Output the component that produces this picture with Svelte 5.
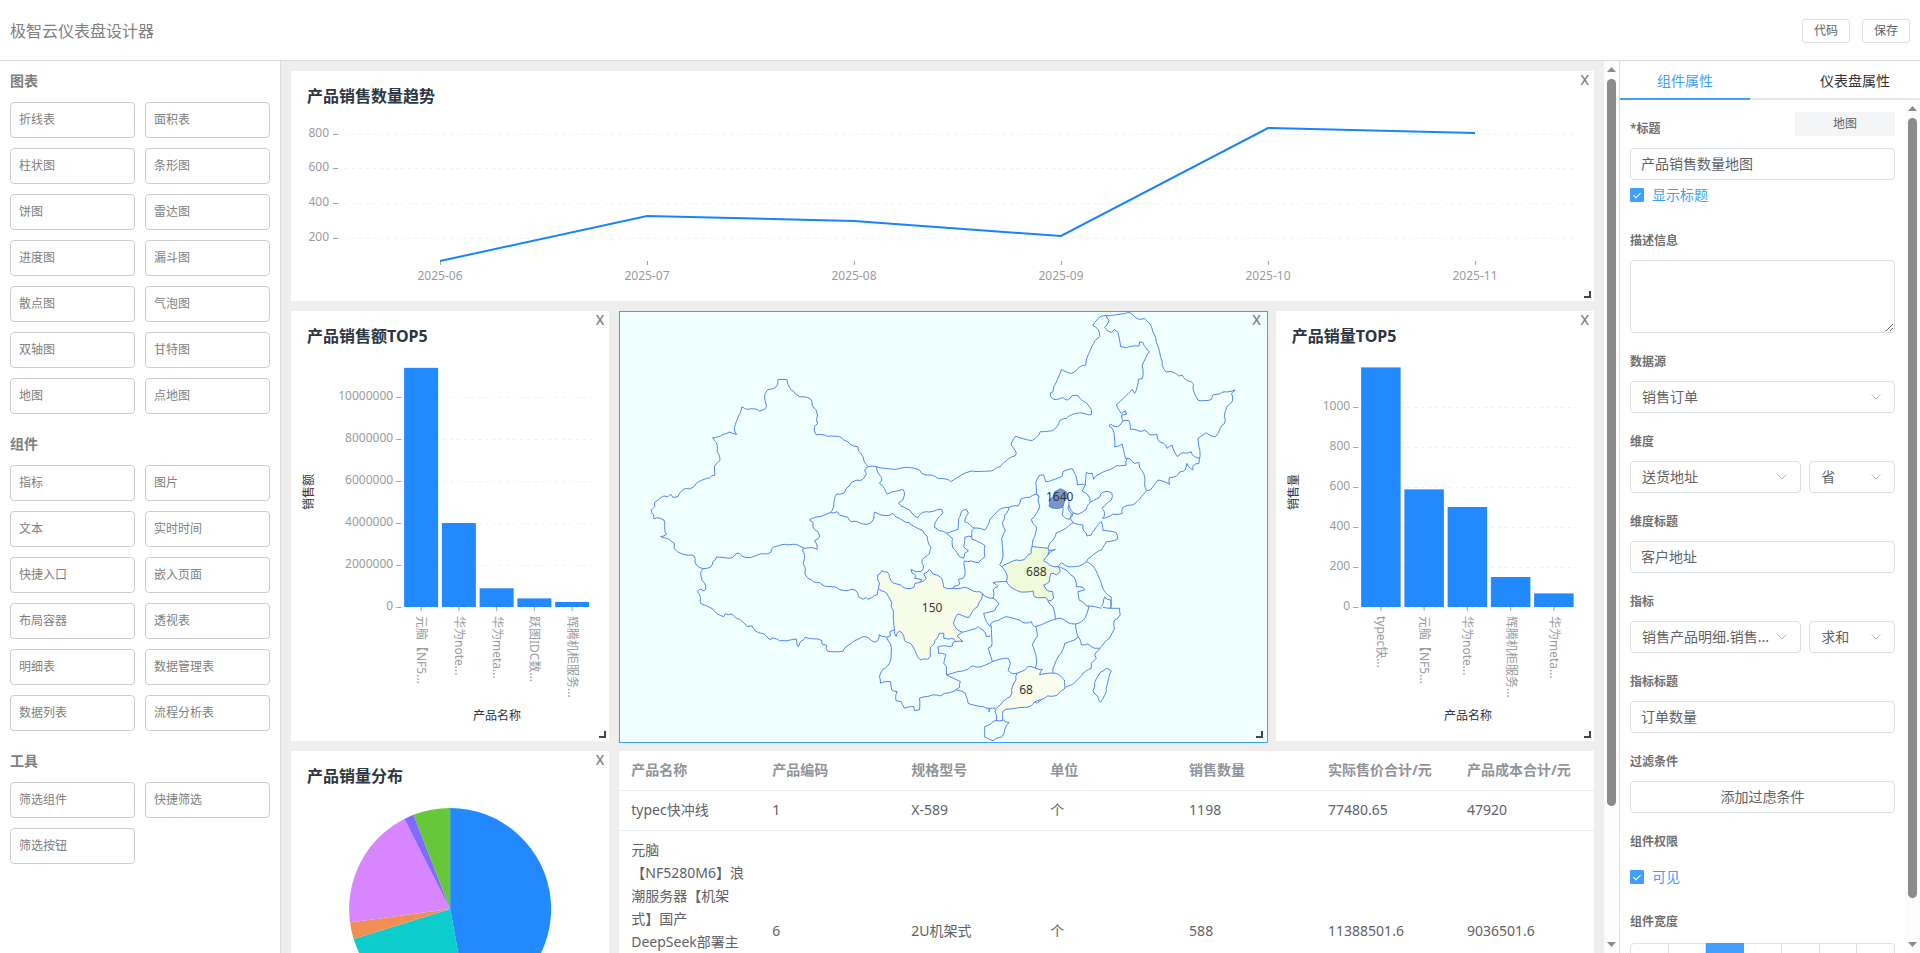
<script lang="ts">
	interface BarChart {
		title: string;
		yTitle: string;
		xTitleAt: number;
		labelRight: number;
		tickLeft: number;
		plotLeft: number;
		barLeft: number;
		barWidth: number;
		step: number;
		scale: number;
		ticks: number[];
		bars: { name: string; value: number }[];
	}

	type Point = [number, number];

	const groups = [
		{
			title: '图表',
			items: ['折线表', '面积表', '柱状图', '条形图', '饼图', '雷达图', '进度图', '漏斗图', '散点图', '气泡图', '双轴图', '甘特图', '地图', '点地图']
		},
		{
			title: '组件',
			items: ['指标', '图片', '文本', '实时时间', '快捷入口', '嵌入页面', '布局容器', '透视表', '明细表', '数据管理表', '数据列表', '流程分析表']
		},
		{ title: '工具', items: ['筛选组件', '快捷筛选', '筛选按钮'] }
	];

	// line chart
	const trendTicks = [
		{ label: 800, y: 63 },
		{ label: 600, y: 97 },
		{ label: 400, y: 132 },
		{ label: 200, y: 167 }
	];
	const trend = [
		{ month: '2025-06', x: 149, y: 190 },
		{ month: '2025-07', x: 356, y: 145 },
		{ month: '2025-08', x: 563, y: 150 },
		{ month: '2025-09', x: 770, y: 165 },
		{ month: '2025-10', x: 977, y: 57 },
		{ month: '2025-11', x: 1184, y: 62 }
	];
	const trendLine = trend.map((p) => `${p.x},${p.y}`).join(' ');

	// bar charts
	const baseline = 296;
	const amount: BarChart = {
		title: '产品销售额TOP5',
		yTitle: '销售额',
		xTitleAt: 206,
		labelRight: 102,
		tickLeft: 105,
		plotLeft: 110,
		barLeft: 113,
		barWidth: 34,
		step: 37.75,
		scale: 0.000021,
		ticks: [0, 2000000, 4000000, 6000000, 8000000, 10000000],
		bars: [
			{ name: '元脑【NF5...', value: 11388501 },
			{ name: '华为note...', value: 4000000 },
			{ name: '华为meta...', value: 890000 },
			{ name: '跃图IDC数...', value: 410000 },
			{ name: '辉腾机柜服务...', value: 240000 }
		]
	};
	const volume: BarChart = {
		title: '产品销量TOP5',
		yTitle: '销售量',
		xTitleAt: 192,
		labelRight: 74,
		tickLeft: 77,
		plotLeft: 82,
		barLeft: 85,
		barWidth: 39.5,
		step: 43.25,
		scale: 0.2,
		ticks: [0, 200, 400, 600, 800, 1000],
		bars: [
			{ name: 'typec快...', value: 1198 },
			{ name: '元脑【NF5...', value: 588 },
			{ name: '华为note...', value: 500 },
			{ name: '辉腾机柜服务...', value: 150 },
			{ name: '华为meta...', value: 68 }
		]
	};

	// pie chart
	const pie = [
		{ value: 1198, color: '#1783ff' },
		{ value: 588, color: '#00c9c9' },
		{ value: 68, color: '#f0884d' },
		{ value: 500, color: '#d580ff' },
		{ value: 40, color: '#7863ff' },
		{ value: 150, color: '#60c42d' }
	];
	const total = pie.reduce((sum, s) => sum + s.value, 0);
	const slices = pie.map((s, i) => {
		const before = pie.slice(0, i).reduce((sum, p) => sum + p.value, 0);
		const a = (before / total) * Math.PI * 2;
		const b = ((before + s.value) / total) * Math.PI * 2;
		const at = (t: number) => `${(159 + 101 * Math.sin(t)).toFixed(2)} ${(158 - 101 * Math.cos(t)).toFixed(2)}`;
		return { color: s.color, d: `M159 158L${at(a)}A101 101 0 0 1 ${at(b)}Z` };
	});

	// table
	const columns = ['产品名称', '产品编码', '规格型号', '单位', '销售数量', '实际售价合计/元', '产品成本合计/元'];
	const rows = [
		['typec快冲线', '1', 'X-589', '个', '1198', '77480.65', '47920'],
		[
			'元脑\n【NF5280M6】浪\n潮服务器【机架\n式】国产\nDeepSeek部署主\n机AI推理\n虚拟化数据库\n服务器',
			'6',
			'2U机架式',
			'个',
			'588',
			'11388501.6',
			'9036501.6'
		]
	];

	// map: province borders as point lists
	const borders = [
		'752,500 738,482 730,462 722,452 720,440 708,438 690,425 670,412 630,409 595,404 589,392 590,380 599,370 596,358 599,345 595,330 583,315 579,298 570,292 556,290 540,286 528,274 515,262 510,252 507,238 495,238 480,238 478,255 472,263 450,268 442,280 443,305 446,320 440,328 425,333 418,328 388,328 372,320 366,340 350,382 350,392 356,403 345,400 334,396 315,403 284,413 290,422 296,428 298,455 306,482 298,488 290,498 291,525 275,534 235,550 228,560 215,567 196,568 180,590 165,592 158,582 150,590 138,588 120,600 110,607 110,620 100,630 107,645 108,657 125,654 138,660 140,680 141,695 146,703 128,710 140,713 153,718 160,724 170,730 168,745 178,755 192,762 210,766 229,768 231,785 235,795 245,803 257,806',
		'257,806 278,802 285,785 296,771 335,775 345,772 355,760 365,760 372,768 400,772 430,761 458,758 463,745 480,738 500,733 525,733 545,738 560,745 575,743 598,748 598,735 590,722 606,708 600,695 585,680 586,668 575,660 606,650 637,638',
		'637,638 648,615 656,582 680,578 685,565 700,548 718,540 725,542 740,532 746,520 740,512 744,505 752,500',
		'257,806 248,820 250,832 260,850 263,868 258,873 246,867 238,875 248,895 250,912 275,922 290,935 318,950 322,942 342,942 350,950 365,958 388,980 403,978 408,988 430,1000 445,1008 458,1020 462,1014 475,1016 485,1023 505,1023 535,1017 537,1035 542,1040 548,1025 562,1012 600,1017 612,1022 612,1032 626,1036 629,1054 675,1054 690,1037 710,1022 733,1011 752,1014 770,1027 780,1022 784,1004 800,1010 806,1012 818,1008 816,995 828,990',
		'560,745 553,750 560,775 556,790 562,803 561,820 570,835 588,846 605,848 630,860 655,862 675,871 700,868 712,870 720,880 722,890 735,898 745,893 750,898 763,893 778,885 782,865',
		'637,638 658,635 665,645 675,648 690,652 700,665 725,668 748,673 760,668 769,655 770,636 790,645 805,647 825,640 845,655 858,663 875,668 890,680 915,692 928,708 930,722 940,742 935,760 920,772 912,788 917,805 910,815 895,815 880,808 882,818 895,828 890,835 912,840 905,848',
		'776,500 785,525 792,540 785,550 800,565 808,582 822,576 838,573 855,568 860,585 855,600 842,609 860,622 875,630 885,642 900,653 910,640 935,636 950,633 972,628 975,638 960,655 952,668 950,682 965,692 986,700',
		'986,700 1021,688 1023,655 1031,635 1046,628 1052,640 1041,665 1064,682 1071,684',
		'986,700 1004,715 1006,745 1021,765 1038,775 1041,760 1052,752 1038,740 1041,712 1062,710 1063,692 1071,684',
		'1062,710 1063,718 1102,737 1102,770 1090,780 1082,788 1060,783 1040,783 1040,800 1042,820 1036,835 1022,838 1026,852 1010,858 1006,865',
		'752,500 776,500 840,507 878,503 905,510 912,520 935,525 960,535 984,537 998,545 1031,525 1066,513 1126,511 1148,500 1166,482 1191,468 1196,460 1180,435 1194,408 1244,421 1256,412 1268,395 1304,392 1318,380 1326,362 1346,355 1376,340 1406,342 1422,343 1421,328 1406,308 1381,287 1364,286 1349,300 1334,292 1308,298 1298,288 1298,278 1306,275 1308,260 1331,208 1361,220 1381,205 1404,195 1406,180 1428,130 1431,122 1446,108 1441,88 1426,76 1436,62 1451,48 1466,46 1531,37',
		'1531,37 1546,45 1566,58 1581,55 1598,72 1606,95 1616,125 1626,155 1634,185 1638,205 1646,216 1671,218 1684,228 1694,225 1711,242 1728,252 1728,272 1741,300 1781,298 1786,285 1806,282 1821,275 1853,269 1842,280 1844,305 1832,315 1821,350 1821,370 1806,390 1794,410 1766,398 1741,415 1744,440 1746,475',
		'1746,475 1744,490 1726,498 1726,510 1708,490 1704,508 1688,515 1676,528 1656,532 1656,553 1621,540 1598,570 1588,572 1571,590 1544,615 1516,622 1514,640 1486,642 1454,655 1461,640 1454,625 1481,600 1483,580 1471,574 1456,576 1446,592 1418,607 1406,628 1381,643 1366,638 1358,655 1366,668',
		'1466,46 1474,60 1461,82 1481,97 1491,88 1501,97 1509,140 1526,143 1564,138 1566,125 1576,127 1596,155 1574,200 1574,235 1562,238 1551,280 1544,268 1496,314 1511,340 1524,332 1526,343 1512,345 1516,362',
		'1516,362 1534,362 1538,388 1564,393 1581,390 1594,403 1618,402 1626,425 1638,430 1648,445 1664,435 1680,470 1696,458 1721,455 1731,470 1746,475',
		'1516,362 1501,380 1478,372 1474,378 1486,390 1491,440 1514,432 1524,475',
		'1524,475 1536,475 1551,490 1564,487 1566,502 1578,520 1581,550 1588,572',
		'1528,475 1526,495 1496,497 1466,512 1446,522 1428,538 1424,520 1406,517 1403,555',
		'1403,555 1379,555 1371,520 1364,506 1336,515 1334,527 1284,545 1278,525 1266,525 1254,548 1256,580 1264,590',
		'1403,555 1394,573 1411,585 1418,607',
		'1264,590 1256,582 1236,592 1209,598 1201,618 1174,622 1146,628 1116,660 1101,690 1071,684',
		'1174,622 1161,645 1154,668 1163,690 1152,715 1156,765 1146,795 1152,800',
		'1264,590 1261,600 1266,620 1256,640 1241,658 1256,680 1246,720 1243,740',
		'1366,668 1351,680 1316,698 1306,720 1291,745',
		'1336,620 1334,645 1344,655 1356,658 1361,640 1351,625 1354,605 1348,590',
		'1366,638 1354,615',
		'1366,668 1396,675 1398,692 1408,708 1421,705 1451,665 1456,692 1496,698 1499,718 1466,725 1451,750 1421,770 1406,785',
		'1406,785 1386,798 1371,800 1351,800 1331,788 1321,800',
		'1291,765 1313,748 1294,752',
		'1406,785 1431,805 1451,850 1458,870 1481,892 1479,925',
		'1321,800 1351,815 1368,830 1376,860 1396,862 1401,870 1381,875 1384,900 1406,918 1416,918 1451,925',
		'1451,920 1458,900 1461,892 1479,900 1479,925 1456,922',
		'1479,925 1506,925 1508,945 1491,960 1491,985 1476,1015 1456,1035 1444,1050',
		'1414,918 1406,945 1391,965 1374,972 1381,1010 1391,1035 1411,1032 1431,1045 1444,1045',
		'1444,1050 1431,1065 1436,1075 1421,1090 1421,1105 1396,1120 1361,1155 1344,1162',
		'1381,1010 1366,1022 1341,1030 1326,1065 1311,1095 1306,1120',
		'1291,903 1306,920 1313,958 1331,955 1351,968 1374,972',
		'1166,845 1126,848 1141,860 1126,870 1126,895',
		'1094,880 1100,888 1126,895 1144,912 1131,932 1098,940 1106,965 1118,980',
		'1118,972 1141,962 1166,950 1196,958 1216,968 1241,965 1251,980 1281,970 1313,958',
		'1034,997 1066,988 1081,980 1096,990 1106,1010 1118,1008',
		'1118,972 1121,1040 1111,1045 1124,1085 1146,1078 1171,1075 1178,1090 1171,1112 1186,1122 1198,1120',
		'1254,980 1259,1010 1244,1035 1256,1075 1252,1105',
		'1134,1225 1116,1225 1114,1236 1114,1225 1096,1220 1051,1210 1041,1178 1014,1170',
		'1124,1085 1091,1100 1066,1098 1051,1108 1021,1115 986,1125 1028,1145 1026,1162 1014,1170',
		'986,1125 986,1100 978,1090 984,1065 962,1060 960,1042 985,1038 1004,1038 1006,1028 1034,1022',
		'1014,1170 981,1180 966,1188 945,1185 930,1190 905,1195 905,1230 890,1232 888,1220 860,1225 850,1205 835,1203 838,1175 822,1170 818,1145 788,1150 785,1130 795,1108 815,1090 820,1060 818,1032 806,1012',
		'1101,1280 1126,1265 1156,1260 1174,1268 1161,1290 1151,1312 1126,1323 1101,1312 1101,1280',
		'1466,1105 1481,1113 1466,1175 1448,1207 1441,1190 1426,1172 1431,1148 1451,1115 1466,1105',
		'1246,1200 1258,1192 1269,1202 1256,1210 1246,1200'
	];

	const regions = [
		{
			value: 1640,
			fill: '#7b96c6',
			x: 1326,
			y: 603,
			points: '1294,600 1306,590 1311,575 1328,566 1348,578 1351,592 1340,605 1336,620 1311,625 1294,618 1294,600'
		},
		{
			value: 688,
			fill: '#eefad8',
			x: 1256,
			y: 828,
			points:
				'1152,800 1196,780 1221,778 1241,760 1243,740 1291,745 1294,752 1291,765 1278,782 1296,795 1321,800 1328,815 1316,825 1300,820 1295,845 1278,855 1285,868 1305,875 1308,895 1292,903 1285,893 1270,893 1250,890 1246,873 1205,875 1180,862 1166,842 1168,825 1152,800'
		},
		{
			value: 150,
			fill: '#f8fdea',
			x: 943,
			y: 935,
			points:
				'782,865 785,850 780,825 792,812 808,816 815,832 828,850 848,855 870,866 888,862 892,850 905,848 912,845 925,835 918,822 935,808 945,822 972,835 978,862 1006,865 1040,862 1060,870 1085,875 1094,880 1086,905 1080,920 1062,938 1055,952 1035,947 1020,942 1012,955 1007,970 1015,985 1034,997 1018,1008 1034,1025 1014,1025 1001,1015 994,1018 978,1015 978,1000 965,1000 958,1015 950,1030 938,1042 938,1070 930,1078 908,1080 895,1060 878,1030 860,1022 858,1008 845,993 835,1010 830,985 827,940 820,920 822,908 812,890 800,875 782,865'
		},
		{
			value: 68,
			fill: '#f9fdeb',
			x: 1225,
			y: 1181,
			points:
				'1198,1120 1221,1110 1231,1100 1254,1105 1274,1108 1266,1125 1306,1120 1325,1125 1340,1140 1342,1165 1328,1175 1320,1185 1290,1188 1268,1200 1250,1207 1230,1222 1200,1224 1165,1228 1155,1235 1155,1262 1136,1262 1132,1235 1148,1215 1178,1190 1182,1168 1195,1140 1198,1120'
		}
	];

	// Splits long edges and nudges the new points so borders look surveyed.
	// An edge gives the same result in either direction, so neighbours line up.
	function roughen(list: string) {
		const pts = list.split(' ').map((p) => p.split(',').map(Number) as Point);
		const out: Point[] = [pts[0]];
		for (let i = 1; i < pts.length; i++) {
			const flip = pts[i - 1][0] > pts[i][0];
			const [a, b] = flip ? [pts[i], pts[i - 1]] : [pts[i - 1], pts[i]];
			const dx = b[0] - a[0];
			const dy = b[1] - a[1];
			const len = Math.hypot(dx, dy) || 1;
			const n = Math.floor(len / 8);
			const mid: Point[] = [];
			for (let k = 1; k < n; k++) {
				const noise = Math.sin(a[0] * 12.9 + a[1] * 78.2 + k * 37.7) * 2.4;
				mid.push([a[0] + (dx * k) / n - (dy / len) * noise, a[1] + (dy * k) / n + (dx / len) * noise]);
			}
			if (flip) mid.reverse();
			out.push(...mid, pts[i]);
		}
		return out.map((p) => `${p[0].toFixed(1)},${p[1].toFixed(1)}`).join(' ');
	}

	let activeTab = $state('组件属性');
	let title = $state('产品销售数量地图');
	let showTitle = $state(true);
	let visible = $state(true);
	let span = $state(3);
</script>

{#snippet tools()}
	<button class="close" aria-label="删除">X</button>
	<span class="resize"></span>
{/snippet}

{#snippet scrollbar(size: number)}
	<div class="scrollbar">
		<svg class="arrow" viewBox="0 0 9 5"><path d="M4.5 0L9 5H0z" /></svg>
		<div class="thumb" style="height: {size}%"></div>
		<svg class="arrow down" viewBox="0 0 9 5"><path d="M0 0h9L4.500 5z" /></svg>
	</div>
{/snippet}

{#snippet barCard(chart: BarChart)}
	<div class="card quarter tall">
		<h3>{chart.title}</h3>
		<svg viewBox="0 40 318 390" class="chart">
			{#each chart.ticks as t (t)}
				{@const y = Math.round(baseline - t * chart.scale)}
				<line class="grid-line" x1={chart.plotLeft} x2="301" y1={y + 0.5} y2={y + 0.5} />
				<line class="tick" x1={chart.tickLeft} x2={chart.tickLeft + 5} y1={y + 0.5} y2={y + 0.5} />
				<text class="axis" x={chart.labelRight} y={y + 3} text-anchor="end">{t}</text>
			{/each}
			{#each chart.bars as bar, i (bar.name)}
				{@const x = chart.barLeft + i * chart.step}
				{@const cx = x + chart.barWidth / 2}
				<rect class="bar" {x} y={baseline - bar.value * chart.scale} width={chart.barWidth} height={bar.value * chart.scale} />
				<line class="tick" x1={cx} x2={cx} y1={baseline} y2={baseline + 4} />
				<text class="axis" transform="translate({cx - 4} 305) rotate(90)">{bar.name}</text>
			{/each}
			<text class="axis-title" x={chart.xTitleAt} y="409" text-anchor="middle">产品名称</text>
			<text class="axis-title" transform="translate(22 181) rotate(-90)" text-anchor="middle">{chart.yTitle}</text>
		</svg>
		{@render tools()}
	</div>
{/snippet}

{#snippet picker(label: string, value: string)}
	<div class="select">
		<select aria-label={label}>
			<option>{value}</option>
		</select>
		<svg viewBox="0 0 10 6"><path d="M0.500 0.500L5 5L9.500 0.500" /></svg>
	</div>
{/snippet}

<div class="designer">
	<header>
		<h1>极智云仪表盘设计器</h1>
		<div class="actions">
			<button>代码</button>
			<button>保存</button>
		</div>
	</header>

	<div class="workspace">
		<aside class="palette">
			{#each groups as group (group.title)}
				<section>
					<h2>{group.title}</h2>
					<div class="palette-grid">
						{#each group.items as item (item)}
							<button>{item}</button>
						{/each}
					</div>
				</section>
			{/each}
		</aside>

		<main>
			<div class="board">
				<div class="card full">
					<h3>产品销售数量趋势</h3>
					<svg viewBox="0 40 1303 190" class="chart">
						{#each trendTicks as t (t.label)}
							<line class="grid-line" x1="47" x2="1287" y1={t.y + 0.5} y2={t.y + 0.5} />
							<line class="tick" x1="42" x2="47" y1={t.y + 0.5} y2={t.y + 0.5} />
							<text class="axis" x="38" y={t.y + 3} text-anchor="end">{t.label}</text>
						{/each}
						{#each trend as p (p.month)}
							<line class="tick" x1={p.x + 0.5} x2={p.x + 0.5} y1="190" y2="194" />
							<text class="axis" x={p.x} y="209" text-anchor="middle">{p.month}</text>
						{/each}
						<polyline class="trend" points={trendLine} />
					</svg>
					{@render tools()}
				</div>

				{@render barCard(amount)}

				<div class="card half tall">
					<div class="selected">
						<svg viewBox="6 36 1941 1290" class="map">
							{#each borders as b (b)}
								<polyline points={roughen(b)} />
							{/each}
							{#each regions as r (r.value)}
								<polygon points={roughen(r.points)} fill={r.fill} />
							{/each}
							{#each regions as r (r.value)}
								<text x={r.x} y={r.y} text-anchor="middle">{r.value}</text>
							{/each}
						</svg>
					</div>
					{@render tools()}
				</div>

				{@render barCard(volume)}

				<div class="card quarter tall">
					<h3>产品销量分布</h3>
					<svg viewBox="0 40 318 390" class="chart">
						{#each slices as s (s.d)}
							<path d={s.d} fill={s.color} fill-opacity="0.95" />
						{/each}
					</svg>
					{@render tools()}
				</div>

				<div class="card wide tall">
					<table>
						<thead>
							<tr>
								{#each columns as c (c)}
									<th>{c}</th>
								{/each}
							</tr>
						</thead>
						<tbody>
							{#each rows as row (row[0])}
								<tr>
									{#each row as cell}
										<td>{cell}</td>
									{/each}
								</tr>
							{/each}
						</tbody>
					</table>
				</div>
			</div>
			{@render scrollbar(82.6)}
		</main>

		<aside class="props">
			<div class="tabs" role="tablist">
				{#each ['组件属性', '仪表盘属性'] as tab (tab)}
					<button role="tab" aria-selected={activeTab === tab} class:active={activeTab === tab} onclick={() => (activeTab = tab)}>{tab}</button>
				{/each}
			</div>
			<div class="props-scroll">
				<form>
					<div class="form-head">
						<label class="caption" for="title">*标题</label>
						<span class="kind">地图</span>
					</div>
					<input id="title" type="text" bind:value={title} />
					<label class="check title-check"><input type="checkbox" bind:checked={showTitle} />显示标题</label>

					<div class="field">
						<label class="caption" for="desc">描述信息</label>
						<textarea id="desc"></textarea>
					</div>
					<div class="field">
						<span class="caption">数据源</span>
						{@render picker('数据源', '销售订单')}
					</div>
					<div class="field">
						<span class="caption">维度</span>
						<div class="pair">
							{@render picker('维度', '送货地址')}
							{@render picker('维度层级', '省')}
						</div>
					</div>
					<div class="field">
						<label class="caption" for="dim-title">维度标题</label>
						<input id="dim-title" type="text" value="客户地址" />
					</div>
					<div class="field">
						<span class="caption">指标</span>
						<div class="pair">
							{@render picker('指标', '销售产品明细.销售...')}
							{@render picker('聚合方式', '求和')}
						</div>
					</div>
					<div class="field">
						<label class="caption" for="metric-title">指标标题</label>
						<input id="metric-title" type="text" value="订单数量" />
					</div>
					<div class="field">
						<span class="caption">过滤条件</span>
						<button type="button" class="add">添加过虑条件</button>
					</div>
					<div class="field">
						<span class="caption">组件权限</span>
						<label class="check"><input type="checkbox" bind:checked={visible} />可见</label>
					</div>
					<div class="field">
						<span class="caption">组件宽度</span>
						<div class="spans">
							{#each [1, 2, 3, 4, 5, 6, 7] as n (n)}
								<input type="radio" name="span" value={n} bind:group={span} aria-label="宽度 {n}" />
							{/each}
						</div>
					</div>
				</form>
				{@render scrollbar(92.7)}
			</div>
		</aside>
	</div>
</div>

<style>
	:global(body) {
		margin: 0;
		background: #fff;
	}

	.designer,
	.designer :is(button, input, select, textarea) {
		font-family: 'Noto Sans', 'Noto Sans CJK SC', sans-serif;
	}

	.designer {
		display: flex;
		flex-direction: column;
		height: 100vh;
		overflow: hidden;
		color: #606266;
		font-size: 14px;
	}

	.designer :is(div, aside, main, header, button, input, select, textarea) {
		box-sizing: border-box;
	}

	h1,
	h2,
	h3 {
		margin: 0;
	}

	button {
		cursor: pointer;
	}

	header {
		display: flex;
		align-items: center;
		justify-content: space-between;
		flex: 0 0 61px;
		padding: 2px 10px 0;
		border-bottom: 1px solid #dcdcdc;
	}

	h1 {
		font-size: 16px;
		font-weight: 400;
		line-height: 24px;
		color: #808080;
	}

	.actions {
		display: flex;
		gap: 12px;
	}

	.actions button {
		width: 48px;
		height: 24px;
		padding: 0;
		border: 1px solid #dcdfe6;
		border-radius: 3px;
		background: #fff;
		color: #606266;
		font-size: 12px;
		line-height: 20px;
	}

	.workspace {
		display: flex;
		flex: 1;
		min-height: 0;
	}

	/* palette */
	.palette {
		flex: 0 0 281px;
		padding: 0 10px;
		border-right: 1px solid #dcdcdc;
		overflow: hidden;
	}

	.palette section {
		padding-bottom: 10px;
	}

	h2 {
		padding-bottom: 2px;
		font-size: 14px;
		line-height: 39px;
		color: #808080;
	}

	.palette-grid {
		display: grid;
		grid-template-columns: 1fr 1fr;
		gap: 10px;
	}

	.palette-grid button {
		height: 36px;
		padding: 0 8px;
		border: 1px solid #ccc;
		border-radius: 4px;
		background: #fff;
		color: #808080;
		font-size: 12px;
		line-height: 32px;
		text-align: left;
	}

	/* board */
	main {
		display: flex;
		flex: 1;
		min-width: 0;
		background: #eee;
		overflow: hidden;
	}

	.board {
		display: grid;
		grid-template-columns: repeat(12, 1fr);
		align-content: start;
		gap: 10px;
		flex: 1;
		min-width: 0;
		padding: 10px;
	}

	.card {
		position: relative;
		min-width: 0;
		background: #fff;
	}

	.full {
		grid-column: span 12;
	}

	.wide {
		grid-column: span 9;
	}

	.half {
		grid-column: span 6;
	}

	.quarter {
		grid-column: span 3;
	}

	.tall {
		height: 430px;
	}

	h3 {
		padding: 15px 16px 5px;
		color: #2c3542;
		font-size: 16px;
		line-height: 20px;
	}

	.chart,
	.map {
		display: block;
		width: 100%;
	}

	.tall .chart {
		height: 390px;
	}

	.close {
		position: absolute;
		top: 0;
		right: 5px;
		padding: 0;
		border: 0;
		background: none;
		color: #808080;
		font-size: 14px;
		font-weight: 500;
		line-height: 18px;
	}

	.resize {
		position: absolute;
		right: 3px;
		bottom: 3px;
		width: 5px;
		height: 5px;
		border: solid #444;
		border-width: 0 2px 2px 0;
	}

	.selected {
		height: 432px;
		margin-right: -2px;
		border: 1px solid #409eff;
		background: #f0ffff;
	}

	.map {
		height: 430px;
	}

	.map polyline,
	.map polygon {
		stroke: #4f83f2;
		stroke-width: 3;
		stroke-linejoin: round;
	}

	.map polyline {
		fill: none;
	}

	.map text {
		fill: #333;
		font-size: 36px;
	}

	.grid-line {
		stroke: #f0f0f1;
		stroke-dasharray: 3 4;
	}

	.tick {
		stroke: #a0a3a8;
	}

	.axis {
		fill: #999b9f;
		font-size: 12px;
	}

	.axis-title {
		fill: #2c3542;
		font-size: 12px;
	}

	.bar {
		fill: #2389ff;
	}

	.trend {
		fill: none;
		stroke: #1783ff;
		stroke-width: 2;
	}

	table {
		width: 100%;
		table-layout: fixed;
		border-collapse: collapse;
	}

	th,
	td {
		padding: 7px 0 9px 12px;
		border-bottom: 1px solid #ebeef5;
		font-size: 14px;
		line-height: 23px;
		text-align: left;
		white-space: pre;
	}

	th {
		color: #909399;
	}

	th:first-child {
		width: 129px;
	}

	/* scrollbars */
	.scrollbar {
		display: flex;
		flex: 0 0 15px;
		flex-direction: column;
		align-items: center;
		padding: 6px 0;
		background: #fcfcfc;
	}

	.scrollbar .arrow {
		flex: 0 0 5px;
		width: 9px;
		margin-bottom: 7px;
		fill: #8b8b8b;
	}

	.scrollbar .down {
		margin: auto 0 0;
	}

	.thumb {
		width: 9px;
		border-radius: 5px;
		background: #8b8b8b;
	}

	/* properties */
	.props {
		display: flex;
		flex-direction: column;
		flex: 0 0 301px;
		border-left: 1px solid #dcdcdc;
	}

	.tabs {
		display: flex;
		justify-content: space-between;
		flex: 0 0 39px;
		box-shadow: inset 0 -2px #e4e7ed;
	}

	.tabs button {
		width: 130px;
		padding: 0;
		border: 0;
		border-bottom: 2px solid transparent;
		background: none;
		color: #303133;
		font-size: 14px;
	}

	.tabs .active {
		border-color: #409eff;
		color: #409eff;
	}

	.props-scroll {
		display: flex;
		flex: 1;
		min-height: 0;
		overflow: hidden;
	}

	form {
		flex: 1;
		min-width: 0;
		padding: 12px 10px;
	}

	.form-head {
		display: flex;
		justify-content: space-between;
		align-items: flex-start;
		height: 36px;
	}

	.form-head .caption {
		padding-top: 7px;
	}

	.kind {
		width: 100px;
		background: #f4f5f7;
		font-size: 12px;
		line-height: 24px;
		text-align: center;
	}

	.caption {
		display: block;
		color: #707070;
		font-size: 12px;
		font-weight: 600;
		line-height: 20px;
	}

	.field {
		margin-bottom: 19px;
	}

	.field .caption {
		margin-bottom: 9px;
	}

	input[type='text'],
	textarea,
	select,
	.add {
		display: block;
		width: 100%;
		height: 32px;
		padding: 0 10px 2px;
		border: 1px solid #dcdfe6;
		border-radius: 4px;
		background: #fff;
		color: #606266;
		font-size: 14px;
	}

	textarea {
		height: 73px;
		resize: vertical;
	}

	.select {
		position: relative;
	}

	select {
		appearance: none;
		padding: 0 24px 2px 11px;
	}

	.select svg {
		position: absolute;
		top: 13px;
		right: 14px;
		width: 10px;
		height: 6px;
		fill: none;
		stroke: #b4b8c0;
		pointer-events: none;
	}

	.pair {
		display: grid;
		grid-template-columns: 2fr 1fr;
		gap: 8px;
	}

	.check {
		display: flex;
		align-items: center;
		gap: 8px;
		height: 32px;
		color: #409eff;
		font-size: 14px;
		line-height: 20px;
	}

	.title-check {
		height: 30px;
		margin-bottom: 21px;
	}

	.check input {
		appearance: none;
		display: grid;
		place-items: center;
		width: 14px;
		height: 14px;
		margin: 0;
		border: 1px solid #dcdfe6;
		border-radius: 1px;
	}

	.check input:checked {
		border-color: #409eff;
		background: #409eff;
	}

	.check input:checked::after {
		content: '';
		width: 3px;
		height: 6px;
		margin-bottom: 2px;
		border: solid #fff;
		border-width: 0 1px 1px 0;
		transform: rotate(45deg);
	}

	.spans {
		display: flex;
		padding-top: 2px;
	}

	.spans input {
		appearance: none;
		flex: 1;
		height: 32px;
		margin: 0;
		border: 1px solid #dcdfe6;
		border-left-width: 0;
	}

	.spans input:first-child {
		border-left-width: 1px;
		border-radius: 4px 0 0 4px;
	}

	.spans input:last-child {
		border-radius: 0 4px 4px 0;
	}

	.spans input:checked {
		border-color: #409eff;
		background: #409eff;
	}
</style>
